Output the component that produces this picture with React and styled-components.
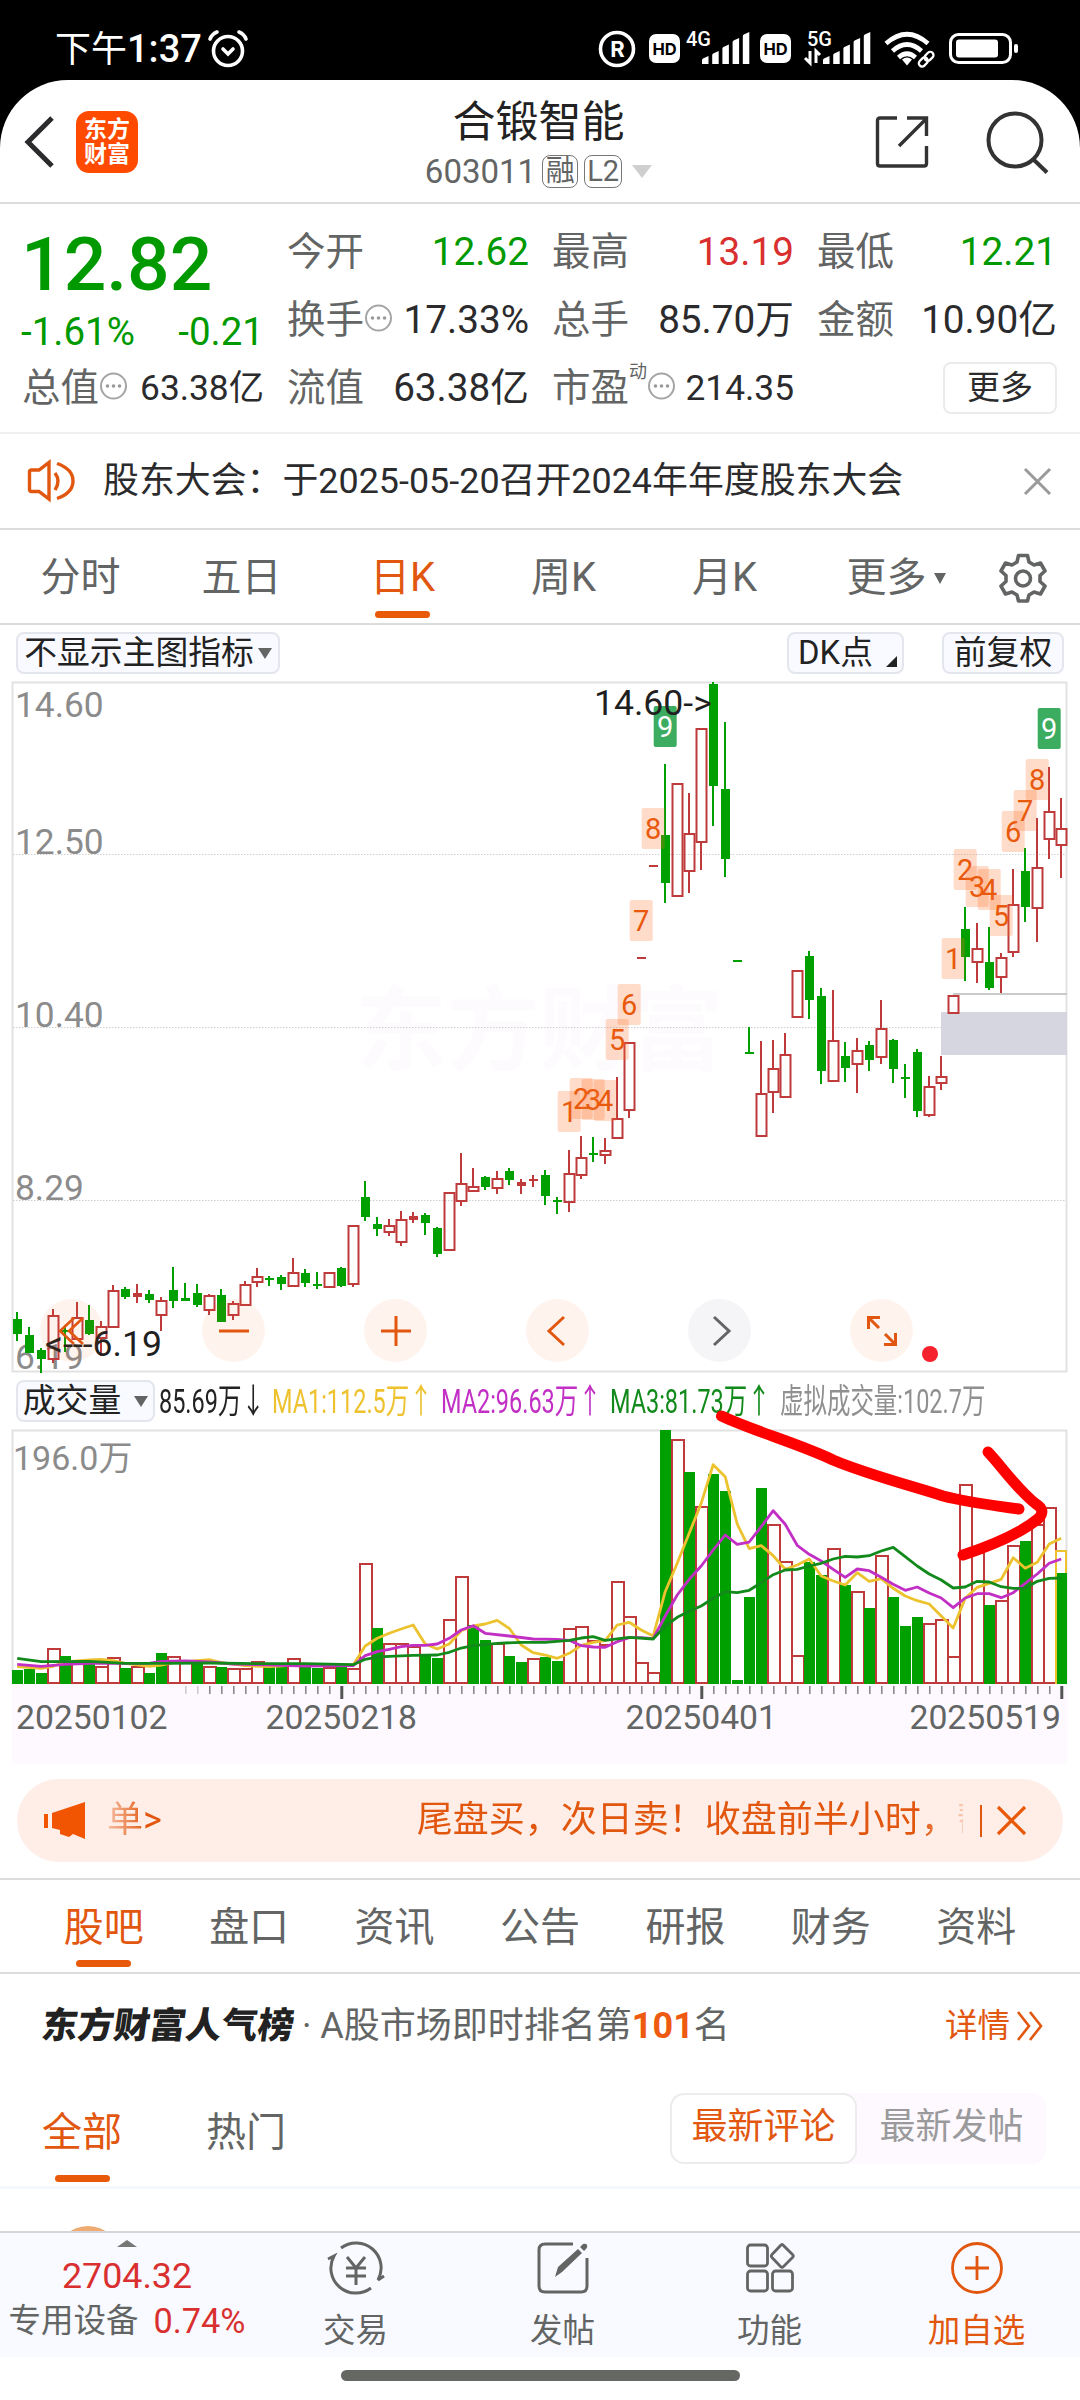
import styled, { createGlobalStyle } from "styled-components";

const GlobalStyles = createGlobalStyle`
  * {
    box-sizing: border-box;
    margin: 0;
    padding: 0;
  }

  body {
    background: #fff;
    color: #2b2b2d;
    font-family: Roboto, "Noto Sans CJK SC", sans-serif;
    font-size: 36px;
    line-height: 1;
  }

  svg {
    display: block;
    flex-shrink: 0;
    overflow: visible;
  }

  button {
    font: inherit;
    color: inherit;
    border: none;
    background: none;
  }
`;

const ORANGE = "#e2570f";
const GREEN = "#009a00";
const RED = "#d9302f";
const CANDLE_RED = "#bf3b3b";
const CANDLE_GREEN = "#00a000";
const GREY = "#636565";

//* ---------- page ----------

const Page = styled.div`
  width: 1080px;
  height: 2400px;
  overflow: hidden;
  background: #000;
  display: flex;
  flex-direction: column;
`;

const Sheet = styled.main`
  flex: 1;
  background: #fff;
  border-radius: 68px 68px 0 0;
  display: flex;
  flex-direction: column;
`;

//* ---------- status bar ----------

const StatusBar = styled.div`
  height: 80px;
  padding: 18px 61px 0 55px;
  display: flex;
  align-items: center;
  color: #fff;
`;

const Clock = styled.span`
  font-size: 36px;
  line-height: 62px;
  margin-right: 6px;
`;

const ClockDigits = styled.span`
  font-size: 38px;
  font-weight: 500;
`;

const StatusIcons = styled.div`
  margin-left: auto;
  display: flex;
  align-items: center;
`;

const StatusSlot = styled.span`
  margin-left: ${(props) => props.$gap}px;
`;

function HdBadge() {
  return (
    <svg width="31" height="34" viewBox="0 0 31 34">
      <rect x="0" y="2" width="31" height="29" rx="7" fill="#fff" />
      <text
        x="15.5"
        y="22.5"
        textAnchor="middle"
        fontFamily="Inter, Roboto, sans-serif"
        fontWeight="700"
        fontSize="16.5"
        fill="#000"
      >
        HD
      </text>
    </svg>
  );
}

function Signal({ label, data }) {
  const left = data ? 19 : 16;
  return (
    <svg width={left + 48} height="34" viewBox={`0 0 ${left + 48} 34`}>
      <text
        x={data ? 3 : 0}
        y="13.5"
        fontSize="20"
        fontWeight="500"
        fill="#fff"
        fontFamily="Roboto, sans-serif"
      >
        {label}
      </text>
      {data && (
        <path
          d="M6 19v12L1 26M12 31V19l4 4"
          stroke="#fff"
          strokeWidth="3"
          fill="none"
        />
      )}
      {[7, 12, 18.5, 25, 31].map((h, i) => (
        <path
          key={h}
          d={`M${left + i * 10.2} 32v${-h + 3}q0 -1 1 -1.5l5.5 -2.5v${h + 1}z`}
          fill="#fff"
        />
      ))}
    </svg>
  );
}

//* ---------- header ----------

const Header = styled.header`
  height: 124px;
  padding: 0 31px 0 24px;
  border-bottom: 2px solid #dcdcdc;
  display: grid;
  grid-template-columns: 300px 1fr 300px;
  align-items: center;
`;

const HeaderSide = styled.div`
  display: flex;
  align-items: center;
  padding-top: 1px;
  gap: ${(props) => props.$gap}px;
  justify-content: ${(props) => props.$justify || "flex-start"};
`;

const Logo = styled.div`
  width: 62px;
  height: 62px;
  border-radius: 13px;
  background: #ff4a00;
  color: #fff;
  font-weight: 700;
  font-size: 23px;
  line-height: 25px;
  text-align: center;
  padding-top: 6px;
`;

const StockTitle = styled.div`
  display: flex;
  flex-direction: column;
  align-items: center;
  padding: 10px 0 0 4px;
`;

const StockName = styled.h1`
  font-size: 43px;
  font-weight: 400;
  line-height: 50px;
  color: #222;
`;

const StockCode = styled.div`
  display: flex;
  align-items: center;
  height: 48px;
  font-size: 33px;
  color: ${GREY};
`;

const Tag = styled.span`
  height: 33px;
  width: ${(props) => props.$width}px;
  border: 1.5px solid #777;
  border-radius: 8px;
  font-size: 29px;
  line-height: 30px;
  text-align: center;
  margin-left: 6px;
`;

const Triangle = styled.i`
  width: 0;
  height: 0;
  border-left: ${(props) => props.$w / 2}px solid transparent;
  border-right: ${(props) => props.$w / 2}px solid transparent;
  border-top: ${(props) => props.$h}px solid ${(props) => props.$color};
  margin-left: ${(props) => props.$gap || 0}px;
`;

//* ---------- quote ----------

const Quote = styled.section`
  height: 230px;
  padding: 14px 22px 0 22px;
  border-bottom: 2px solid #efefef;
  display: grid;
  grid-template-columns: 242px 242px 242px 240px;
  grid-template-rows: repeat(3, 68px);
  column-gap: 23px;
`;

const Price = styled.div`
  grid-row: span 2;
  color: ${GREEN};
`;

const Last = styled.div`
  font-size: 75px;
  font-weight: 500;
  line-height: 88px;
  padding-top: 2px;
  margin-left: -1px;
`;

const Change = styled.div`
  display: flex;
  justify-content: space-between;
  font-size: 38.5px;
  line-height: 44px;
  padding-top: 2px;
  margin-left: -1px;
`;

const Cell = styled.div`
  display: flex;
  align-items: center;
  justify-content: space-between;
  height: 68px;
  white-space: nowrap;
`;

const CellLabel = styled.span`
  display: flex;
  align-items: center;
  font-size: 38.5px;
  color: ${GREY};
`;

const CellValue = styled.span`
  font-size: ${(props) => (props.$small ? 35.3 : 38.7)}px;
  color: ${(props) => props.$color || "#2b2b2d"};
  padding-top: 1px;
`;

const Sup = styled.sup`
  font-size: 18px;
  align-self: flex-start;
  margin-top: -6px;
`;

const MoreButton = styled.button`
  width: 114px;
  height: 52px;
  margin-left: auto;
  border: 2px solid #ebebeb;
  border-radius: 8px;
  font-size: 33px;
  line-height: 46px;
`;

function Dots() {
  return (
    <svg width="29" height="30" viewBox="0 0 29 30">
      <circle
        cx="14.5"
        cy="13"
        r="12.5"
        fill="none"
        stroke="#a5a5a5"
        strokeWidth="2"
      />
      <g fill="#999">
        <circle cx="8.5" cy="13" r="1.8" />
        <circle cx="14.5" cy="13" r="1.8" />
        <circle cx="20.5" cy="13" r="1.8" />
      </g>
    </svg>
  );
}

//* ---------- news ----------

const News = styled.section`
  height: 96px;
  padding: 0 29px 0 28px;
  border-bottom: 2px solid #dcdcdc;
  display: flex;
  align-items: center;
  white-space: nowrap;
`;

const NewsText = styled.p`
  flex: 1;
  margin-left: 28px;
  font-size: 35.9px;
  padding-top: 2px;
`;

//* ---------- tabs ----------

const PeriodTabs = styled.nav`
  height: 95px;
  border-bottom: 2px solid #dcdcdc;
  display: grid;
  grid-template-columns: repeat(5, 161px) 182px 72px;
`;

const Tab = styled.button`
  position: relative;
  display: flex;
  align-items: center;
  justify-content: center;
  padding-top: 3px;
  font-size: 40px;
  color: ${(props) => (props.$active ? ORANGE : GREY)};

  &::after {
    content: "";
    display: ${(props) => (props.$active ? "block" : "none")};
    position: absolute;
    bottom: ${(props) => props.$bar || 5}px;
    width: 55px;
    height: 7px;
    border-radius: 4px;
    background: #e85a0a;
  }
`;

const InfoTabs = styled.nav`
  height: 96px;
  padding: 0 31px;
  border-top: 2px solid #dcdcdc;
  border-bottom: 2px solid #dcdcdc;
  display: grid;
  grid-template-columns: repeat(7, 1fr);
`;

//* ---------- chart ----------

const Toolbar = styled.div`
  height: 57px;
  padding: 7px 16px 0 16px;
  display: flex;
  gap: 38px;
`;

const Chip = styled.button`
  height: 42px;
  width: ${(props) => props.$width}px;
  margin-right: ${(props) => (props.$push ? "auto" : 0)};
  border: 2px solid #e4e6ee;
  border-radius: 8px;
  background: #f8faff;
  color: #222;
  font-size: 32.8px;
  line-height: 36px;
  display: flex;
  align-items: center;
  justify-content: center;
  white-space: nowrap;
`;

const Corner = styled.i`
  align-self: flex-end;
  margin: 0 -4px 5px 13px;
  border-left: 11px solid transparent;
  border-bottom: 11px solid #222;
`;

const Charts = styled.section`
  position: relative;
`;

const Controls = styled.div`
  position: absolute;
  left: 40px;
  top: 617px;
  display: flex;
  gap: 99px;
`;

const RoundButton = styled.button`
  width: 63px;
  height: 63px;
  border-radius: 50%;
  display: grid;
  place-items: center;
  background: ${(props) =>
    props.$muted ? "rgba(90, 60, 120, 0.06)" : "rgba(255, 100, 40, 0.08)"};
`;

const Drawing = styled.svg`
  position: absolute;
  left: 700px;
  top: 720px;
`;

const Indicators = styled.div`
  height: 57px;
  padding: 7px 16px 0;
  display: flex;
  white-space: nowrap;
`;

const Indicator = styled.span`
  width: ${(props) => props.$width}px;
  color: ${(props) => props.$color};
  font-size: 34px;
  line-height: 42px;
`;

const Condensed = styled.span`
  display: inline-block;
  transform: scaleX(0.69);
  transform-origin: left;
`;

const Dates = styled.div`
  height: 80px;
  margin: 0 13px 0 12px;
  background: #fdf9fe;
`;

// x of every trading day, 12px apart
const dayX = (i) => 17.2 + i * 12;

// [direction, high, body top, body bottom, low]; "f" is a filled red body
const candles = [
  ["g", 1312, 1319, 1334, 1341],
  ["g", 1327, 1335, 1353, 1353],
  ["g", 1348, 1350, 1359, 1373],
  ["r", 1309, 1315, 1359, 1363],
  ["g", 1325, 1330, 1332, 1352],
  ["r", 1302, 1317, 1339, 1339],
  ["g", 1305, 1320, 1334, 1335],
  ["r", 1321, 1326, 1338, 1356],
  ["r", 1285, 1290, 1327, 1327],
  ["g", 1287, 1289, 1297, 1299],
  ["f", 1284, 1293, 1297, 1303],
  ["g", 1290, 1294, 1300, 1303],
  ["r", 1297, 1300, 1315, 1331],
  ["g", 1267, 1290, 1301, 1308],
  ["g", 1283, 1298, 1301, 1301],
  ["g", 1284, 1293, 1305, 1307],
  ["r", 1294, 1295, 1310, 1315],
  ["g", 1289, 1295, 1322, 1322],
  ["r", 1301, 1303, 1315, 1320],
  ["r", 1281, 1284, 1305, 1306],
  ["r", 1268, 1276, 1282, 1287],
  ["g", 1276, 1278, 1280, 1286],
  ["g", 1275, 1277, 1284, 1290],
  ["r", 1258, 1272, 1286, 1286],
  ["g", 1269, 1273, 1283, 1287],
  ["g", 1272, 1284, 1286, 1289],
  ["r", 1272, 1272, 1287, 1287],
  ["g", 1267, 1268, 1286, 1287],
  ["r", 1225, 1225, 1284, 1287],
  ["g", 1181, 1197, 1217, 1221],
  ["g", 1217, 1224, 1229, 1236],
  ["r", 1219, 1225, 1232, 1236],
  ["r", 1211, 1219, 1242, 1246],
  ["f", 1212, 1216, 1220, 1223],
  ["g", 1213, 1215, 1223, 1235],
  ["g", 1227, 1228, 1254, 1257],
  ["r", 1192, 1192, 1250, 1250],
  ["r", 1153, 1183, 1201, 1206],
  ["r", 1168, 1186, 1191, 1191],
  ["g", 1176, 1177, 1187, 1190],
  ["r", 1171, 1178, 1188, 1194],
  ["g", 1168, 1171, 1180, 1185],
  ["f", 1179, 1182, 1186, 1194],
  ["f", 1175, 1179, 1181, 1187],
  ["g", 1170, 1175, 1196, 1205],
  ["g", 1197, 1200, 1202, 1214],
  ["r", 1150, 1173, 1202, 1212],
  ["r", 1136, 1157, 1175, 1179],
  ["g", 1137, 1153, 1155, 1162],
  ["r", 1138, 1150, 1155, 1164],
  ["r", 1077, 1118, 1138, 1138],
  ["r", 1042, 1042, 1110, 1118],
  ["f", 957, 957, 959, 959],
  ["f", 865, 865, 867, 867],
  ["g", 764, 835, 883, 903],
  ["r", 783, 783, 896, 896],
  ["r", 793, 833, 871, 893],
  ["r", 728, 728, 842, 870],
  ["g", 682, 684, 786, 826],
  ["g", 722, 789, 859, 877],
  ["g", 960, 960, 962, 962],
  ["g", 1027, 1052, 1054, 1054],
  ["r", 1041, 1093, 1136, 1137],
  ["r", 1040, 1068, 1092, 1113],
  ["r", 1033, 1054, 1097, 1097],
  ["r", 970, 970, 1017, 1017],
  ["g", 951, 956, 1000, 1019],
  ["g", 988, 996, 1071, 1084],
  ["r", 990, 1040, 1081, 1081],
  ["g", 1042, 1056, 1068, 1082],
  ["r", 1038, 1050, 1064, 1093],
  ["g", 1041, 1045, 1060, 1071],
  ["r", 1000, 1028, 1057, 1064],
  ["g", 1039, 1040, 1069, 1083],
  ["g", 1064, 1077, 1079, 1098],
  ["g", 1049, 1052, 1111, 1117],
  ["r", 1076, 1086, 1115, 1117],
  ["r", 1056, 1076, 1083, 1090],
  ["r", 995, 995, 1013, 1013],
  ["g", 907, 929, 957, 981],
  ["r", 923, 948, 962, 983],
  ["g", 927, 962, 988, 990],
  ["r", 953, 957, 977, 993],
  ["r", 869, 904, 952, 957],
  ["g", 848, 871, 907, 922],
  ["r", 818, 867, 908, 942],
  ["r", 767, 811, 839, 859],
  ["r", 798, 828, 845, 878],
];

// [day, number, top]
const markers = [
  [46, 1, 1091],
  [47, 2, 1078],
  [48, 3, 1079],
  [49, 4, 1080],
  [50, 5, 1019],
  [51, 6, 984],
  [52, 7, 900],
  [53, 8, 808],
  [54, 9, 706],
  [78, 1, 938],
  [79, 2, 849],
  [80, 3, 866],
  [81, 4, 869],
  [82, 5, 895],
  [83, 6, 811],
  [84, 7, 790],
  [85, 8, 759],
  [86, 9, 708],
];

const volumeColors =
  "gggrgrgrrgrggrrgrgrrrggrggrgrrgrrrggrrggrggrggrrrrrrrrgrgrggggg" +
  "rrrggrgrgrgggrrrrrgrrgrrg";

// bar tops
const volumes = [
  1670, 1669, 1673, 1648, 1656, 1663, 1663, 1666, 1657, 1668, 1666, 1673, 1653,
  1656, 1660, 1662, 1666, 1667, 1668, 1668, 1661, 1667, 1663, 1658, 1663, 1668,
  1667, 1667, 1668, 1563, 1628, 1643, 1643, 1646, 1656, 1658, 1619, 1576, 1625,
  1640, 1643, 1656, 1662, 1658, 1657, 1661, 1628, 1626, 1640, 1644, 1581, 1616,
  1662, 1672, 1430, 1439, 1472, 1506, 1474, 1491, 1680, 1597, 1488, 1524, 1561,
  1655, 1562, 1575, 1548, 1585, 1591, 1608, 1555, 1597, 1626, 1617, 1623, 1619,
  1656, 1484, 1552, 1605, 1600, 1545, 1541, 1524, 1507, 1573,
];

// moving averages as [day, height in thirds of a pixel below the panel top]
const ma1 = [
  [0, 890], [2, 895], [3, 889], [4, 876], [6, 870], [7, 868], [8, 872],
  [9, 880], [11, 889], [12, 885], [13, 878], [16, 869], [17, 878], [19, 887],
  [21, 890], [24, 884], [28, 885], [29, 828], [30, 805], [31, 790], [32, 777],
  [33, 765], [34, 822], [35, 837], [36, 822], [37, 782], [38, 768], [39, 762],
  [40, 751], [41, 775], [42, 825], [43, 848], [44, 855], [45, 865], [46, 850],
  [47, 826], [48, 817], [49, 812], [50, 765], [51, 757], [52, 780], [53, 798],
  [54, 665], [55, 580], [56, 490], [57, 400], [58, 284], [59, 320], [60, 462],
  [61, 536], [62, 527], [63, 557], [64, 598], [65, 585], [66, 567], [67, 618],
  [68, 633], [69, 645], [70, 608], [71, 634], [72, 626], [73, 655], [74, 678],
  [75, 692], [76, 702], [77, 738], [78, 774], [79, 685], [80, 652], [81, 640],
  [82, 628], [83, 563], [84, 595], [85, 577], [86, 522], [87, 505],
];
const ma2 = [
  [0, 883], [2, 889], [4, 883], [6, 880], [11, 880], [12, 874], [14, 873],
  [16, 876], [18, 882], [20, 884], [24, 888], [28, 887], [29, 857], [30, 845],
  [31, 838], [32, 830], [33, 826], [34, 826], [35, 822], [36, 805], [37, 780],
  [38, 767], [39, 790], [41, 798], [43, 807], [45, 808], [46, 811], [47, 827],
  [48, 831], [49, 832], [50, 815], [51, 803], [52, 803], [53, 806], [54, 738],
  [55, 675], [56, 628], [57, 588], [58, 540], [59, 495], [60, 523], [61, 516],
  [62, 470], [63, 422], [64, 463], [65, 526], [66, 553], [67, 573], [68, 598],
  [69, 622], [70, 597], [71, 602], [72, 622], [73, 643], [74, 661], [75, 651],
  [76, 669], [77, 684], [78, 713], [79, 684], [80, 671], [81, 671], [82, 683],
  [83, 668], [84, 640], [85, 612], [86, 580], [87, 567],
];
const ma3 = [
  [0, 865], [2, 875], [6, 874], [9, 880], [12, 880], [16, 879], [20, 881],
  [24, 881], [28, 884], [29, 868], [30, 861], [31, 859], [33, 856], [35, 855],
  [36, 847], [37, 834], [38, 827], [40, 820], [42, 817], [44, 817], [46, 811],
  [47, 804], [48, 800], [49, 811], [51, 802], [53, 807], [54, 768], [55, 742],
  [56, 724], [57, 708], [58, 685], [59, 665], [60, 668], [61, 661], [62, 638],
  [63, 614], [64, 600], [65, 598], [66, 588], [67, 580], [68, 567], [69, 559],
  [70, 561], [71, 557], [72, 543], [73, 532], [74, 560], [75, 588], [76, 612],
  [77, 630], [78, 654], [79, 651], [80, 634], [81, 636], [82, 650], [83, 655],
  [84, 655], [85, 634], [86, 625], [87, 624],
];

const linePoints = (data) =>
  data.map(([i, v]) => `${dayX(i)},${(1370 + v / 3).toFixed(1)}`).join(" ");

function Candle({ i, type, high, top, bottom, low }) {
  const x = Math.round(dayX(i));
  const color = type === "g" ? CANDLE_GREEN : CANDLE_RED;
  if (type === "r") {
    return (
      <g stroke={color} strokeWidth="2" fill="none">
        <path d={`M${x} ${high}V${top}M${x} ${bottom}V${low}`} />
        <rect x={x - 4.5} y={top + 1} width="10" height={bottom - top - 1} />
      </g>
    );
  }
  return (
    <g fill={color}>
      <rect x={x - 1} y={high} width="2" height={low - high} />
      <rect x={x - 4} y={top} width="9" height={bottom - top} />
    </g>
  );
}

function PriceChart() {
  return (
    <svg
      width="1080"
      height="691"
      viewBox="0 682 1080 691"
      fontFamily="Roboto, 'Noto Sans CJK SC', sans-serif"
    >
      <text
        x="355"
        y="1063"
        fontSize="92"
        fontWeight="700"
        fill="#fefbfe"
      >
        东方财富
      </text>
      <rect
        x="12.5"
        y="682.5"
        width="1054"
        height="689"
        fill="none"
        stroke="#e2e2e2"
        strokeWidth="2"
      />
      {[854, 1027, 1200].map((y) => (
        <path
          key={y}
          d={`M13 ${y + 0.5}H1066`}
          stroke="#cfcfcf"
          strokeDasharray="1.5 1.5"
        />
      ))}
      <rect x="941" y="1012" width="126" height="43" fill="#d5d6df" />
      <path d="M953 994H1067" stroke="#cacaca" strokeWidth="2" />
      <g fill="#8b8b8b" fontSize="35.3">
        <text x="15" y="717">14.60</text>
        <text x="15" y="854">12.50</text>
        <text x="15" y="1027">10.40</text>
        <text x="15" y="1199.5">8.29</text>
        <text x="15" y="1368.5">6.19</text>
      </g>
      {candles.map(([type, high, top, bottom, low], i) => (
        <Candle key={i} {...{ i, type, high, top, bottom, low }} />
      ))}
      {markers.map(([day, n, top]) => (
        <g key={day}>
          <rect
            x={dayX(day) - 11.5}
            y={top}
            width="23"
            height="41"
            rx="2"
            fill={n === 9 ? "#3bac60" : "rgba(255, 110, 40, 0.25)"}
          />
          <text
            x={dayX(day)}
            y={top + 31}
            textAnchor="middle"
            fontSize="29"
            fill={n === 9 ? "#fff" : "#e8590c"}
          >
            {n}
          </text>
        </g>
      ))}
      <g fill="#1f1f1f" fontSize="35.6">
        <text x="594" y="715">14.60-&gt;</text>
        <text x="45" y="1355.5">&lt;---6.19</text>
      </g>
      <circle cx="930" cy="1354" r="8" fill="#f5222d" />
    </svg>
  );
}

function VolumeChart() {
  return (
    <svg
      width="1080"
      height="254"
      viewBox="0 1430 1080 254"
      fontFamily="Roboto, 'Noto Sans CJK SC', sans-serif"
    >
      <path
        d="M12.5 1684V1430.5H1066.5V1684"
        fill="none"
        stroke="#e2e2e2"
        strokeWidth="2"
      />
      <text x="13" y="1470" fontSize="34" fill="#8b8b8b">
        196.0万
      </text>
      {volumes.map((top, i) => {
        const x = Math.round(dayX(i));
        return volumeColors[i] === "g" ? (
          <rect
            key={i}
            x={x - 5}
            y={top}
            width="11"
            height={1684 - top}
            fill={CANDLE_GREEN}
          />
        ) : (
          <rect
            key={i}
            x={x - 5}
            y={top + 1}
            width="12"
            height={1682 - top}
            fill="#fff"
            stroke={CANDLE_RED}
            strokeWidth="2"
          />
        );
      })}
      <path
        d="M1056 1684V1551H1066V1573"
        fill="none"
        stroke="#edc22e"
        strokeWidth="2"
      />
      <g fill="none" strokeWidth="2.8" strokeLinejoin="round">
        <polyline points={linePoints(ma1)} stroke="#ecc22f" />
        <polyline points={linePoints(ma2)} stroke="#c22fc4" />
        <polyline points={linePoints(ma3)} stroke="#128a1b" />
      </g>
    </svg>
  );
}

function DateAxis() {
  return (
    <svg width="1055" height="80" viewBox="12 1684 1055 80">
      {volumes.map((_, i) => {
        const major = i === 27 || i === 57 || i === 87;
        if (i < 14) return null;
        return (
          <path
            key={i}
            d={`M${dayX(i) + 0.6} 1686v${major ? 13 : 8}`}
            stroke={major ? "#555" : "#8a8a8a"}
            strokeWidth={major ? 3 : 1.6}
            opacity={i < 16 ? 0.4 : 1}
          />
        );
      })}
      <g fill={GREY} fontSize="33.7" fontFamily="Roboto, sans-serif">
        <text x="16" y="1729">20250102</text>
        <text x="265.5" y="1729">20250218</text>
        <text x="625.5" y="1729">20250401</text>
        <text x="909.5" y="1729">20250519</text>
      </g>
    </svg>
  );
}

//* ---------- banner ----------

const Banner = styled.div`
  height: 83px;
  margin: 15px 17px 16px 17px;
  padding: 0 34px 0 27px;
  border-radius: 42px;
  background: #ffeee7;
  color: ${ORANGE};
  display: flex;
  align-items: center;
  white-space: nowrap;
`;

const Marquee = styled.div`
  display: flex;
  width: 856px;
  height: 60px;
  line-height: 58px;
  margin-left: 20px;
  overflow: hidden;
  mask-image: linear-gradient(
    to right,
    rgba(0, 0, 0, 0.3),
    #000 40px,
    #000 815px,
    transparent 868px
  );
`;

const MarqueeNext = styled.span`
  margin-left: 255px;
`;

const BannerRule = styled.i`
  width: 1.5px;
  height: 32px;
  background: ${ORANGE};
  margin: 0 14px 0 17px;
`;

//* ---------- community ----------

const Popularity = styled.div`
  height: 104px;
  padding: 0 36px 0 42px;
  display: flex;
  align-items: center;
  font-size: 36px;
  color: ${GREY};
`;

const PopularityTitle = styled.b`
  font-size: 36px;
  font-weight: 900;
  color: #222;
  width: 260px;
  white-space: nowrap;
  transform: skewX(-8deg);
`;

const Rank = styled.b`
  font-size: 36px;
  font-weight: 700;
  color: #ee5a10;
`;

const Detail = styled.span`
  margin-left: auto;
  display: flex;
  align-items: center;
  gap: 6px;
  font-size: 32.5px;
  color: ${ORANGE};
`;

const FeedBar = styled.div`
  height: 111px;
  padding: 0 34px 0 42px;
  display: flex;
  border-bottom: 3px solid #f5f8fc;
`;

const FeedTab = styled(Tab)`
  width: 80px;
  height: 106px;
  margin-right: 84px;
`;

const Toggle = styled.div`
  margin: 15px 0 0 auto;
  height: 71px;
  display: flex;
  background: #fdf9fe;
  border-radius: 14px;
`;

const ToggleItem = styled.button`
  width: ${(props) => (props.$active ? 187 : 189)}px;
  height: 71px;
  padding-bottom: 3px;
  border: ${(props) => (props.$active ? "2px solid #ececec" : "none")};
  border-radius: 14px;
  background: ${(props) => (props.$active ? "#fff" : "none")};
  color: ${(props) => (props.$active ? ORANGE : "#9a9a9c")};
  font-size: 36px;
`;

const Feed = styled.div`
  height: 42px;
  padding: 37px 0 0 55px;
  overflow: hidden;
`;

const Avatar = styled.div`
  width: 66px;
  height: 66px;
  border-radius: 50%;
  background: #efab72;
`;

//* ---------- bottom bar ----------

const BottomBar = styled.footer`
  height: 126px;
  border-top: 2px solid #d5d6da;
  background: #f8faff;
  display: grid;
  grid-template-columns: 252px repeat(4, 207px);
`;

const IndexBox = styled.div`
  display: flex;
  flex-direction: column;
  align-items: center;
  color: ${RED};
  padding: 7px 0 0 2px;
`;

const Up = styled.i`
  border-left: 10px solid transparent;
  border-right: 10px solid transparent;
  border-bottom: 7px solid #777;
`;

const IndexValue = styled.div`
  font-size: 35.8px;
  line-height: 42px;
  margin-top: 8px;
`;

const IndexRow = styled.div`
  display: flex;
  align-items: center;
  gap: 15px;
  font-size: 34.3px;
  line-height: 42px;
  margin-top: 3px;
`;

const IndexName = styled.span`
  font-size: 32.5px;
  color: ${GREY};
`;

const NavItem = styled.button`
  display: flex;
  flex-direction: column;
  align-items: center;
  font-size: 32.5px;
  padding-top: 8px;
  gap: 20px;
  color: ${(props) => (props.$active ? ORANGE : GREY)};
`;

const HomeArea = styled.div`
  height: 43px;
  background: #fff;
  padding-top: 13px;
`;

const HomeBar = styled.div`
  width: 399px;
  height: 11px;
  margin: 0 auto;
  border-radius: 6px;
  background: #656763;
`;

const periods = ["分时", "五日", "日K", "周K", "月K"];
const infoTabs = ["股吧", "盘口", "资讯", "公告", "研报", "财务", "资料"];

function App() {
  return (
    <>
      <GlobalStyles />
      <Page>
        <StatusBar>
          <Clock>
            下午<ClockDigits>1:37</ClockDigits>
          </Clock>
          <svg
            width="40"
            height="38"
            viewBox="0 0 40 38"
            fill="none"
            stroke="#fff"
            strokeWidth="3.6"
            strokeLinecap="round"
          >
            <circle cx="20" cy="21" r="14.5" />
            <path d="M15 19L20 24l5-5" />
            <path d="M2 9Q4 4 9 2M38 9Q36 4 31 2" />
          </svg>
          <StatusIcons>
            <svg width="36" height="38" viewBox="0 0 36 38">
              <circle
                cx="18"
                cy="19"
                r="16.5"
                fill="none"
                stroke="#fff"
                strokeWidth="3.6"
              />
              <text
                x="18.5"
                y="27"
                textAnchor="middle"
                fontFamily="Inter, sans-serif"
                fontWeight="700"
                fontSize="22"
                fill="#fff"
              >
                R
              </text>
            </svg>
            <StatusSlot $gap={14}>
              <HdBadge />
            </StatusSlot>
            <StatusSlot $gap={6}>
              <Signal label="4G" />
            </StatusSlot>
            <StatusSlot $gap={10}>
              <HdBadge />
            </StatusSlot>
            <StatusSlot $gap={13}>
              <Signal label="5G" data />
            </StatusSlot>
            <StatusSlot $gap={13}>
              <svg
                width="51"
                height="36"
                viewBox="0 0 51 36"
                fill="none"
                stroke="#fff"
              >
                <path
                  d="M2 12.5Q23 -6 44 12.5M8.500 20Q23 7 37.500 20"
                  strokeWidth="4.6"
                />
                <path d="M14.500 26.500Q23 19 31.500 26.500" strokeWidth="4.6" />
                <path
                  d="M23 34.500l-5-6q5-4 10 0z"
                  fill="#fff"
                  strokeWidth="0"
                />
                <g transform="rotate(-45 42 28)" strokeWidth="2.3">
                  <rect x="33" y="25" width="10" height="6.5" rx="3.2" />
                  <rect x="41" y="25" width="10" height="6.5" rx="3.2" />
                </g>
              </svg>
            </StatusSlot>
            <StatusSlot $gap={14}>
              <svg width="70" height="32" viewBox="0 0 70 32">
                <rect
                  x="1.5"
                  y="1.5"
                  width="60"
                  height="28"
                  rx="8"
                  fill="none"
                  stroke="#fff"
                  strokeWidth="3"
                />
                <rect x="7" y="6.5" width="42" height="18" rx="3" fill="#fff" />
                <rect x="65" y="11" width="4" height="9" rx="2" fill="#fff" />
              </svg>
            </StatusSlot>
          </StatusIcons>
        </StatusBar>

        <Sheet>
          <Header>
            <HeaderSide $gap={22}>
              <svg
                width="30"
                height="52"
                viewBox="0 0 30 52"
                fill="none"
                stroke="#2b2b2d"
                strokeWidth="5"
              >
                <path d="M28 2L4 26l24 24" />
              </svg>
              <Logo>
                东方
                <br />
                财富
              </Logo>
            </HeaderSide>
            <StockTitle>
              <StockName>合锻智能</StockName>
              <StockCode>
                603011
                <Tag $width={36}>融</Tag>
                <Tag $width={38}>L2</Tag>
                <Triangle $w={20} $h={13} $color="#cfcfcf" $gap={10} />
              </StockCode>
            </StockTitle>
            <HeaderSide $gap={56} $justify="flex-end">
              <svg
                width="54"
                height="54"
                viewBox="0 0 54 54"
                fill="none"
                stroke="#333"
                strokeWidth="3.4"
              >
                <path d="M22 3H5Q2.500 3 2.500 5.500V48.500Q2.500 51 5 51H49Q51.500 51 51.500 48.500V31" />
                <path d="M32 3H51.500V21M51 4L24 31" />
              </svg>
              <svg
                width="64"
                height="64"
                viewBox="0 0 64 64"
                fill="none"
                stroke="#333"
                strokeWidth="4"
              >
                <circle cx="30" cy="30" r="26.5" />
                <path d="M48.500 49.500L62 62.500" />
              </svg>
            </HeaderSide>
          </Header>

          <Quote>
            <Price>
              <Last>12.82</Last>
              <Change>
                <span>-1.61%</span>
                <span>-0.21</span>
              </Change>
            </Price>
            <Cell>
              <CellLabel>今开</CellLabel>
              <CellValue $color={GREEN}>12.62</CellValue>
            </Cell>
            <Cell>
              <CellLabel>最高</CellLabel>
              <CellValue $color={RED}>13.19</CellValue>
            </Cell>
            <Cell>
              <CellLabel>最低</CellLabel>
              <CellValue $color={GREEN}>12.21</CellValue>
            </Cell>
            <Cell>
              <CellLabel>
                换手
                <Dots />
              </CellLabel>
              <CellValue>17.33%</CellValue>
            </Cell>
            <Cell>
              <CellLabel>总手</CellLabel>
              <CellValue>85.70万</CellValue>
            </Cell>
            <Cell>
              <CellLabel>金额</CellLabel>
              <CellValue>10.90亿</CellValue>
            </Cell>
            <Cell>
              <CellLabel>
                总值
                <Dots />
              </CellLabel>
              <CellValue $small>63.38亿</CellValue>
            </Cell>
            <Cell>
              <CellLabel>流值</CellLabel>
              <CellValue>63.38亿</CellValue>
            </Cell>
            <Cell>
              <CellLabel>
                市盈
                <Sup>动</Sup>
                <Dots />
              </CellLabel>
              <CellValue $small>214.35</CellValue>
            </Cell>
            <Cell>
              <MoreButton>更多</MoreButton>
            </Cell>
          </Quote>

          <News>
            <svg
              width="47"
              height="42"
              viewBox="0 0 47 42"
              fill="none"
              stroke={ORANGE}
              strokeWidth="3.4"
            >
              <path d="M21 2.500V39L11 31.500H3.500Q1.500 31.500 1.500 29.500V12Q1.500 10 3.500 10H11z" />
              <path d="M27 13Q33 21 27 30M29 3.500Q45 9 45 21T29 38.500" />
            </svg>
            <NewsText>股东大会：于2025-05-20召开2024年年度股东大会</NewsText>
            <svg width="27" height="27" viewBox="0 0 27 27">
              <path
                d="M1 1l25 25M26 1L1 26"
                stroke="#9a9a9a"
                strokeWidth="3"
              />
            </svg>
          </News>

          <PeriodTabs>
            {periods.map((name) => (
              <Tab key={name} $active={name === "日K"}>
                {name}
              </Tab>
            ))}
            <Tab>
              更多
              <Triangle $w={13} $h={11} $color={GREY} $gap={7} />
            </Tab>
            <Tab>
              <svg
                width="50"
                height="50"
                viewBox="0 0 50 50"
                fill="none"
                stroke={GREY}
                strokeWidth="3.6"
                strokeLinejoin="round"
              >
                <path d="M20.500 2.500h9l1.500 6.500 5 3 6.500-2 4.500 8-5 4.500v6l5 4.500-4.500 8-6.500-2-5 3-1.500 6h-9l-1.500-6-5-3-6.500 2-4.500-8 5-4.500v-6l-5-4.500 4.500-8 6.500 2 5-3z" />
                <circle cx="25" cy="25.5" r="7.5" />
              </svg>
            </Tab>
          </PeriodTabs>

          <Toolbar>
            <Chip $width={264} $push>
              不显示主图指标
              <Triangle $w={14} $h={11} $color={GREY} $gap={4} />
            </Chip>
            <Chip $width={117}>
              DK点
              <Corner />
            </Chip>
            <Chip $width={122}>前复权</Chip>
          </Toolbar>

          <Charts>
            <PriceChart />
            <Indicators>
              <Chip $width={139}>
                成交量
                <Triangle $w={14} $h={11} $color={GREY} $gap={13} />
              </Chip>
              <Indicator $width={4} />
              <Indicator $width={113} $color="#222">
                <Condensed>85.69万↓</Condensed>
              </Indicator>
              <Indicator $width={169} $color="#edc22e">
                <Condensed>MA1:112.5万↑</Condensed>
              </Indicator>
              <Indicator $width={169} $color="#c22fc4">
                <Condensed>MA2:96.63万↑</Condensed>
              </Indicator>
              <Indicator $width={170} $color="#128a1b">
                <Condensed>MA3:81.73万↑</Condensed>
              </Indicator>
              <Indicator $width={220} $color="#909090">
                <Condensed>虚拟成交量:102.7万</Condensed>
              </Indicator>
            </Indicators>
            <VolumeChart />
            <Dates>
              <DateAxis />
            </Dates>

            <Controls>
              <RoundButton>
                <svg width="32" height="32" viewBox="0 0 32 32">
                  <path
                    d="M18 3L4 16l14 13M27 3L13 16l14 13"
                    fill="none"
                    stroke={ORANGE}
                    strokeWidth="2.6"
                  />
                </svg>
              </RoundButton>
              <RoundButton>
                <svg width="32" height="32" viewBox="0 0 32 32">
                  <path d="M1 16h30" stroke={ORANGE} strokeWidth="3" />
                </svg>
              </RoundButton>
              <RoundButton>
                <svg width="32" height="32" viewBox="0 0 32 32">
                  <path d="M1 16h30M16 1v30" stroke={ORANGE} strokeWidth="3" />
                </svg>
              </RoundButton>
              <RoundButton>
                <svg width="32" height="32" viewBox="0 0 32 32">
                  <path
                    d="M22 2L7 16l15 14"
                    fill="none"
                    stroke={ORANGE}
                    strokeWidth="3"
                  />
                </svg>
              </RoundButton>
              <RoundButton $muted>
                <svg width="32" height="32" viewBox="0 0 32 32">
                  <path
                    d="M10 2l15 14L10 30"
                    fill="none"
                    stroke={GREY}
                    strokeWidth="3"
                  />
                </svg>
              </RoundButton>
              <RoundButton>
                <svg width="32" height="32" viewBox="0 0 32 32">
                  <path
                    d="M14 2.500H2.500V14M3 3l10 10M18 29.500h11.500V18M29 29L19 19"
                    fill="none"
                    stroke={ORANGE}
                    strokeWidth="3"
                  />
                </svg>
              </RoundButton>
            </Controls>

            <Drawing width="360" height="170" viewBox="700 1402 360 170">
              <path
                d="M721.500 1416C756 1432 800 1444 833 1460C866 1474 912 1486 943 1496C966 1502 990 1505 1019 1509M988 1452C1003 1468 1018 1490 1036 1504Q1046 1510 1039 1518C1020 1534 990 1546 963 1555"
                fill="none"
                stroke="#ff0000"
                strokeWidth="11"
                strokeLinecap="round"
                strokeLinejoin="round"
              />
            </Drawing>
          </Charts>

          <Banner>
            <svg width="43" height="38" viewBox="0 0 43 38" fill="#f15502">
              <path d="M0 12h4v14H0zM8 11L41 0v37L29 32l-4 3-9-3V28L8 26z" />
            </svg>
            <Marquee>
              <span>单&gt;</span>
              <MarqueeNext>尾盘买，次日卖！收盘前半小时，帮</MarqueeNext>
            </Marquee>
            <BannerRule />
            <svg width="31" height="31" viewBox="0 0 31 31">
              <path
                d="M2 2l27 27M29 2L2 29"
                stroke="#e85a0a"
                strokeWidth="3.2"
              />
            </svg>
          </Banner>

          <InfoTabs>
            {infoTabs.map((name) => (
              <Tab key={name} $active={name === "股吧"}>
                {name}
              </Tab>
            ))}
          </InfoTabs>

          <Popularity>
            <PopularityTitle>东方财富人气榜</PopularityTitle>
            <span>
              · A股市场即时排名第<Rank>101</Rank>名
            </span>
            <Detail>
              详情
              <svg width="28" height="30" viewBox="0 0 28 30">
                <path
                  d="M2 1l11 14L2 29M14 1l11 14-11 14"
                  fill="none"
                  stroke={ORANGE}
                  strokeWidth="2.6"
                />
              </svg>
            </Detail>
          </Popularity>

          <FeedBar>
            <FeedTab $active $bar={2}>
              全部
            </FeedTab>
            <FeedTab>热门</FeedTab>
            <Toggle>
              <ToggleItem $active>最新评论</ToggleItem>
              <ToggleItem>最新发帖</ToggleItem>
            </Toggle>
          </FeedBar>

          <Feed>
            <Avatar />
          </Feed>

          <BottomBar>
            <IndexBox>
              <Up />
              <IndexValue>2704.32</IndexValue>
              <IndexRow>
                <IndexName>专用设备</IndexName>
                0.74%
              </IndexRow>
            </IndexBox>
            <NavItem>
              <svg
                width="60"
                height="54"
                viewBox="0 0 60 54"
                fill="none"
                stroke="currentColor"
                strokeWidth="3"
              >
                <path d="M15 7A25 25 0 0 1 52 39l6-4M45 47A25 25 0 0 1 8 15L2 18" />
                <path d="M21 16l9 11 9-11M20 27h20M20 35h20M30 27v17" />
              </svg>
              交易
            </NavItem>
            <NavItem>
              <svg
                width="54"
                height="54"
                viewBox="0 0 54 54"
                fill="none"
                stroke="currentColor"
                strokeWidth="3"
              >
                <path d="M37 3H9Q3 3 3 9V45Q3 51 9 51H45Q51 51 51 45V17" />
                <path
                  d="M19 36l3-10L42 8l4 4L26 31zM44 6l3-3q3-1 4 1t-1 4l-2 2z"
                  fill="currentColor"
                  strokeWidth="0"
                />
              </svg>
              发帖
            </NavItem>
            <NavItem>
              <svg
                width="52"
                height="54"
                viewBox="0 0 52 54"
                fill="none"
                stroke="currentColor"
                strokeWidth="2.8"
              >
                <rect x="3.5" y="4" width="20" height="21" rx="3" />
                <rect x="3.5" y="30" width="20" height="20" rx="3" />
                <rect x="28.5" y="30" width="20" height="20" rx="3" />
                <path d="M36.500 4.500Q38 2.500 39.500 4.500L48.500 13.500Q50 15 48.500 16.500L39.500 25.500Q38 27 36.500 25.500L28 16.500Q26.500 15 28 13.500z" />
              </svg>
              功能
            </NavItem>
            <NavItem $active>
              <svg
                width="54"
                height="54"
                viewBox="0 0 54 54"
                fill="none"
                stroke="currentColor"
                strokeWidth="2.8"
              >
                <circle cx="27" cy="27" r="24.5" />
                <path d="M15 27h24M27 15v24" />
              </svg>
              加自选
            </NavItem>
          </BottomBar>
          <HomeArea>
            <HomeBar />
          </HomeArea>
        </Sheet>
      </Page>
    </>
  );
}

export default App;
